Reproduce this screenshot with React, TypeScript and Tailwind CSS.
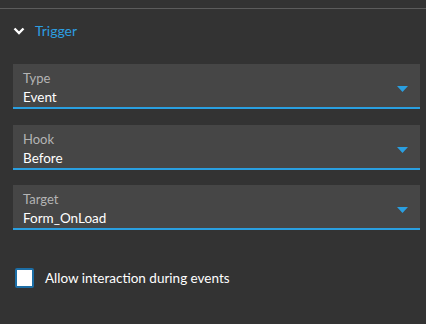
import React from "react";

function Field({ label, value }: { label: string; value: string }) {
  return (
    <div className="relative h-[45px] bg-[#464646] border-b-2 border-[#2a9fe0] pl-[10px] pt-[6px]">
      <div className="text-[13px] leading-[16px] text-[#b4b4b4]">{label}</div>
      <div className="mt-[2px] text-[13.5px] leading-[18px] text-white">{value}</div>
      <svg className="absolute right-[12px] top-[22px]" width="11" height="6" viewBox="0 0 11 6">
        <path d="M0 0H11L5.5 6Z" fill="#2a9fe0" />
      </svg>
    </div>
  );
}

export default function App() {
  return (
    <div className="w-[426px] h-[324px] bg-[#333333] overflow-hidden" style={{ fontFamily: "Lato, 'Open Sans', sans-serif" }}>
      <div className="h-[8px]" />
      <div className="h-px bg-[#5c5c5c]" />
      <div className="flex items-center h-[44px] pl-[13px] pb-[1px]">
        <svg width="12" height="8" viewBox="0 0 12 8" className="mr-[10px]">
          <path d="M1.5 1.5L6 6L10.5 1.5" stroke="#ffffff" strokeWidth="2.4" fill="none" />
        </svg>
        <span className="text-[14px] text-[#2d9ee0]">Trigger</span>
      </div>
      <div className="ml-[13px] mr-[6px] mt-[11px] flex flex-col gap-[15.5px]">
        <Field label="Type" value="Event" />
        <Field label="Hook" value="Before" />
        <Field label="Target" value="Form_OnLoad" />
      </div>
      <div className="flex items-center mt-[38px] pl-[15px]">
        <div className="w-[19px] h-[20px] bg-white border-2 border-[#1c6ea6] rounded-[2px]" />
        <span className="ml-[11px] text-[13.5px] text-white">Allow interaction during events</span>
      </div>
    </div>
  );
}
